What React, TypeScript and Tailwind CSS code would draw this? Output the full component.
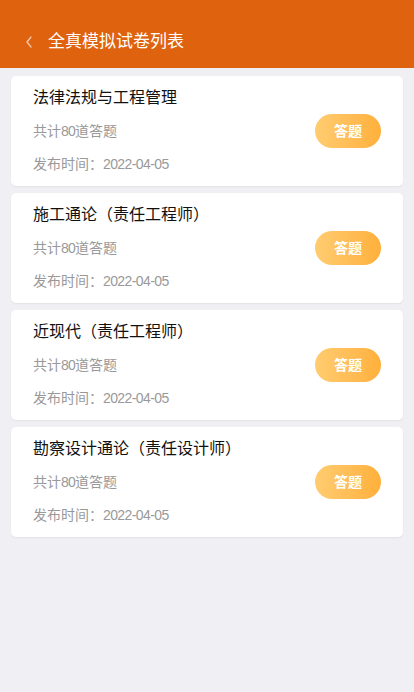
const papers = [
  "法律法规与工程管理",
  "施工通论（责任工程师）",
  "近现代（责任工程师）",
  "勘察设计通论（责任设计师）",
];

export default function App() {
  return (
    <div
      className="min-h-[692px] bg-[#f0eff4]"
      style={{ fontFamily: '"Liberation Sans", "Noto Sans CJK SC", sans-serif' }}
    >
      <header className="h-[68px] bg-[#df620f] flex items-end pb-[15px] pl-[24px]">
        <svg width="10" height="14" viewBox="0 0 10 14" className="mb-[4px]" aria-hidden>
          <path d="M7 2 L3 7 L7 12" fill="none" stroke="#f6c4a4" strokeWidth="1.4" strokeLinecap="round" strokeLinejoin="round" />
        </svg>
        <h1 className="ml-[14px] text-[17px] leading-[22px] text-white">全真模拟试卷列表</h1>
      </header>

      <div className="px-[11px] pt-[8px] flex flex-col gap-[7px]">
        {papers.map((title) => (
          <div
            key={title}
            className="bg-white rounded-[5px] shadow-[0_1px_2px_rgba(0,0,0,0.06)] pl-[22px] pr-[22px] pt-[12px] pb-[12px] h-[110px]"
          >
            <div className="text-[16px] leading-[20px] text-[#111]">{title}</div>
            <div className="flex items-center justify-between mt-[6px]">
              <span className="text-[14px] leading-[20px] text-[#999]">
                共计<span className="tracking-[-0.8px]">80</span>道答题
              </span>
              <button className="w-[66px] h-[34px] rounded-full bg-gradient-to-r from-[#ffcc70] to-[#ffb03a] text-white text-[14px] font-bold">
                答题
              </button>
            </div>
            <div className="mt-[6px] text-[14px] leading-[20px] text-[#999]">
              发布时间：<span className="tracking-[-0.6px]">2022-04-05</span>
            </div>
          </div>
        ))}
      </div>
    </div>
  );
}
